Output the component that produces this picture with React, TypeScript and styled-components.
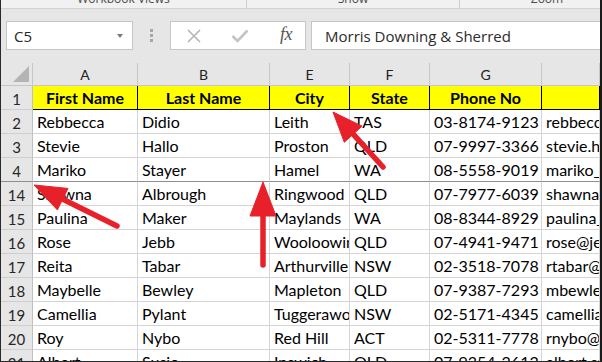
import React from "react";
import styled, { createGlobalStyle } from "styled-components";

const GlobalStyle = createGlobalStyle`
  html, body { margin: 0; padding: 0; background: #ffffff; }
  #root { width: 602px; height: 362px; }
`;

const Frame = styled.div`
  position: relative;
  box-sizing: border-box;
  width: 602px;
  height: 362px;
  overflow: hidden;
  background: #e6e6e6;
  border-left: 1px solid #2a2a2a;
  border-right: 2px solid #1a1a1a;
  border-bottom: 1px solid #2a2a2a;
  display: flex;
  flex-direction: column;
  font-family: Lato, "Liberation Sans", sans-serif;
`;

const RibbonStrip = styled.div`
  height: 8px;
  flex: none;
  display: flex;
  background: #f1f1f1;
  border-bottom: 1px solid #d2d2d2;
  overflow: hidden;
`;

const RibbonGroup = styled.div<{ $w?: number; $shift?: number }>`
  box-sizing: border-box;
  ${(p) => (p.$w ? `width: ${p.$w}px; flex: none;` : "flex: 1;")}
  display: flex;
  justify-content: center;
  padding-left: ${(p) => p.$shift ?? 0}px;
  border-right: 1px solid #d0d0d0;
  &:last-child { border-right: none; }
`;

const RibbonLabel = styled.span`
  font-family: "Open Sans", "Liberation Sans", sans-serif;
  font-size: 12px;
  line-height: 12px;
  margin-top: -7px;
  color: #4a4a4a;
  white-space: nowrap;
`;

const FormulaBar = styled.div`
  flex: none;
  display: flex;
  align-items: flex-start;
  padding: 12px 0 13px 5px;
`;

const NameBox = styled.div`
  box-sizing: border-box;
  width: 127px;
  height: 29px;
  flex: none;
  background: #ffffff;
  border: 1px solid #c6c6c6;
  display: flex;
  align-items: center;
  justify-content: space-between;
  padding: 0 9px 0 7px;
  font-family: "Open Sans", "Liberation Sans", sans-serif;
  font-size: 15px;
  color: #262626;
`;

const Caret = styled.span`
  width: 0;
  height: 0;
  border-left: 3.5px solid transparent;
  border-right: 3.5px solid transparent;
  border-top: 4px solid #7a7a7a;
  margin-top: 1px;
`;

const DotHandle = styled.div`
  flex: none;
  width: 3px;
  margin: 8px 17px 0 17px;
  display: flex;
  flex-direction: column;
  gap: 2px;
`;

const Dot = styled.span`
  width: 3px;
  height: 3px;
  background: #a6a6a6;
`;

const ButtonsBox = styled.div`
  box-sizing: border-box;
  width: 136px;
  height: 29px;
  flex: none;
  background: #ffffff;
  border: 1px solid #c6c6c6;
  display: flex;
  align-items: center;
`;

const IconSlot = styled.div`
  width: 46px;
  flex: none;
  display: flex;
  align-items: center;
  justify-content: center;
`;

const FxLabel = styled.span`
  font-family: "Liberation Serif", "DejaVu Serif", serif;
  font-style: italic;
  font-size: 18px;
  color: #555555;
  margin-top: -2px;
  letter-spacing: -0.5px;
`;

const FormulaInput = styled.div`
  box-sizing: border-box;
  flex: 1;
  height: 29px;
  margin-left: 5px;
  background: #ffffff;
  border: 1px solid #c6c6c6;
  border-right: none;
  display: flex;
  align-items: center;
  padding-left: 13px;
  font-family: "Open Sans", "Liberation Sans", sans-serif;
  font-size: 15px;
  color: #2b2b2b;
  white-space: nowrap;
`;

const COLS = "32px 105px 132px 80px 80px 112px 58px";

const Sheet = styled.div`
  flex: 1;
  display: grid;
  grid-template-columns: ${COLS};
  grid-auto-rows: 24px;
  grid-template-rows: 23px;
  background: #ffffff;
  align-content: start;
`;

const Corner = styled.div`
  position: relative;
  background: #e6e6e6;
  border-right: 1px solid #c6c6c6;
  border-bottom: 1px solid #c6c6c6;
  box-sizing: border-box;
`;

const CornerTriangle = styled.span`
  position: absolute;
  right: 3px;
  bottom: 3px;
  width: 0;
  height: 0;
  border-left: 16px solid transparent;
  border-bottom: 16px solid #b4b4b4;
`;

const ColHead = styled.div`
  box-sizing: border-box;
  background: #e6e6e6;
  border-right: 1px solid #c6c6c6;
  border-bottom: 1px solid #c6c6c6;
  text-align: center;
  font-size: 14px;
  line-height: 23px;
  color: #222222;
`;

const RowHead = styled.div<{ $frozen?: boolean }>`
  box-sizing: border-box;
  background: #e6e6e6;
  border-right: 1px solid #c0c0c0;
  border-bottom: 1px solid ${(p) => (p.$frozen ? "#8e8e8e" : "#cfcfcf")};
  text-align: center;
  font-size: 15px;
  line-height: 24px;
  padding-top: 1px;
  color: #262626;
`;

const Cell = styled.div<{ $frozen?: boolean }>`
  box-sizing: border-box;
  border-right: 1px solid #d4d4d4;
  border-bottom: 1px solid ${(p) => (p.$frozen ? "#8e8e8e" : "#d4d4d4")};
  padding: 0 4px;
  font-size: 16px;
  line-height: 24px;
  color: #000000;
  white-space: nowrap;
  overflow: hidden;
  text-overflow: clip;
`;

const HeadCell = styled.div`
  box-sizing: border-box;
  background: #ffff00;
  border-right: 1px solid #000000;
  border-bottom: 1px solid #000000;
  text-align: center;
  font-size: 16px;
  font-weight: 700;
  line-height: 24px;
  color: #000000;
  white-space: nowrap;
  overflow: hidden;
  &:last-child { border-right: none; }
`;

const Overlay = styled.svg`
  position: absolute;
  left: 0;
  top: 0;
  pointer-events: none;
`;

type ArrowProps = { tip: [number, number]; tail: [number, number]; head?: number; half?: number };

function Arrow({ tip, tail, head = 30, half = 12 }: ArrowProps) {
  const dx = tip[0] - tail[0];
  const dy = tip[1] - tail[1];
  const len = Math.hypot(dx, dy);
  const ux = dx / len;
  const uy = dy / len;
  const bx = tip[0] - ux * head;
  const by = tip[1] - uy * head;
  const px = -uy;
  const py = ux;
  const pts = [
    `${tip[0]},${tip[1]}`,
    `${bx + px * half},${by + py * half}`,
    `${bx - px * half},${by - py * half}`,
  ].join(" ");
  return (
    <g fill="#e8202a" stroke="#e8202a">
      <line x1={tail[0]} y1={tail[1]} x2={bx + ux * 2} y2={by + uy * 2} strokeWidth={5.5} strokeLinecap="round" />
      <polygon points={pts} strokeWidth={1} strokeLinejoin="round" />
    </g>
  );
}

const columns = [
  { letter: "A", title: "First Name" },
  { letter: "B", title: "Last Name" },
  { letter: "E", title: "City" },
  { letter: "F", title: "State" },
  { letter: "G", title: "Phone No" },
  { letter: "", title: "" },
];

const rows: { n: number; cells: string[] }[] = [
  { n: 2, cells: ["Rebbecca", "Didio", "Leith", "TAS", "03-8174-9123", "rebbecca.didio@didio.com.au"] },
  { n: 3, cells: ["Stevie", "Hallo", "Proston", "QLD", "07-9997-3366", "stevie.hallo@hotmail.com"] },
  { n: 4, cells: ["Mariko", "Stayer", "Hamel", "WA", "08-5558-9019", "mariko_stayer@hotmail.com"] },
  { n: 14, cells: ["Shawna", "Albrough", "Ringwood", "QLD", "07-7977-6039", "shawna.albrough@albrough.com.au"] },
  { n: 15, cells: ["Paulina", "Maker", "Maylands", "WA", "08-8344-8929", "paulina_maker@maker.net.au"] },
  { n: 16, cells: ["Rose", "Jebb", "Wooloowin", "QLD", "07-4941-9471", "rose@jebb.net.au"] },
  { n: 17, cells: ["Reita", "Tabar", "Arthurville", "NSW", "02-3518-7078", "rtabar@hotmail.com"] },
  { n: 18, cells: ["Maybelle", "Bewley", "Mapleton", "QLD", "07-9387-7293", "mbewley@yahoo.com"] },
  { n: 19, cells: ["Camellia", "Pylant", "Tuggerawong", "NSW", "02-5171-4345", "camellia.pylant@gmail.com"] },
  { n: 20, cells: ["Roy", "Nybo", "Red Hill", "ACT", "02-5311-7778", "rnybo@nybo.net.au"] },
  { n: 21, cells: ["Albert", "Susic", "Ipswich", "QLD", "07-9354-2612", "albert.susic@gmail.com"] },
];

export default function App() {
  return (
    <>
      <GlobalStyle />
      <Frame>
        <RibbonStrip>
          <RibbonGroup $w={246}>
            <RibbonLabel>Workbook Views</RibbonLabel>
          </RibbonGroup>
          <RibbonGroup $w={213}>
            <RibbonLabel>Show</RibbonLabel>
          </RibbonGroup>
          <RibbonGroup $shift={34}>
            <RibbonLabel>Zoom</RibbonLabel>
          </RibbonGroup>
        </RibbonStrip>

        <FormulaBar>
          <NameBox>
            <span>C5</span>
            <Caret />
          </NameBox>
          <DotHandle>
            <Dot />
            <Dot />
            <Dot />
          </DotHandle>
          <ButtonsBox>
            <IconSlot>
              <svg width="16" height="14" viewBox="0 0 16 14">
                <path d="M2 1 L14 13 M14 1 L2 13" stroke="#b5b5b5" strokeWidth="1.6" fill="none" />
              </svg>
            </IconSlot>
            <IconSlot>
              <svg width="18" height="14" viewBox="0 0 18 14">
                <path d="M1.5 7 L6.5 12 L16.5 1.5" stroke="#c4c4c4" strokeWidth="2.6" fill="none" />
              </svg>
            </IconSlot>
            <IconSlot>
              <FxLabel>fx</FxLabel>
            </IconSlot>
          </ButtonsBox>
          <FormulaInput>Morris Downing &amp; Sherred</FormulaInput>
        </FormulaBar>

        <Sheet>
          <Corner>
            <CornerTriangle />
          </Corner>
          {columns.map((c, i) => (
            <ColHead key={"h" + i}>{c.letter}</ColHead>
          ))}

          <RowHead>1</RowHead>
          {columns.map((c, i) => (
            <HeadCell key={"t" + i}>{c.title}</HeadCell>
          ))}

          {rows.map((r) => {
            const frozen = r.n === 4;
            return (
              <React.Fragment key={r.n}>
                <RowHead $frozen={frozen}>{r.n}</RowHead>
                {r.cells.map((v, i) => (
                  <Cell key={i} $frozen={frozen}>
                    {v}
                  </Cell>
                ))}
              </React.Fragment>
            );
          })}
        </Sheet>

        <Overlay width={602} height={362} viewBox="0 0 602 362">
          <Arrow tip={[332, 112]} tail={[382, 167]} />
          <Arrow tip={[33, 185]} tail={[116, 226]} head={32} half={12} />
          <Arrow tip={[262, 182]} tail={[262, 265]} head={34} half={13} />
        </Overlay>
      </Frame>
    </>
  );
}
